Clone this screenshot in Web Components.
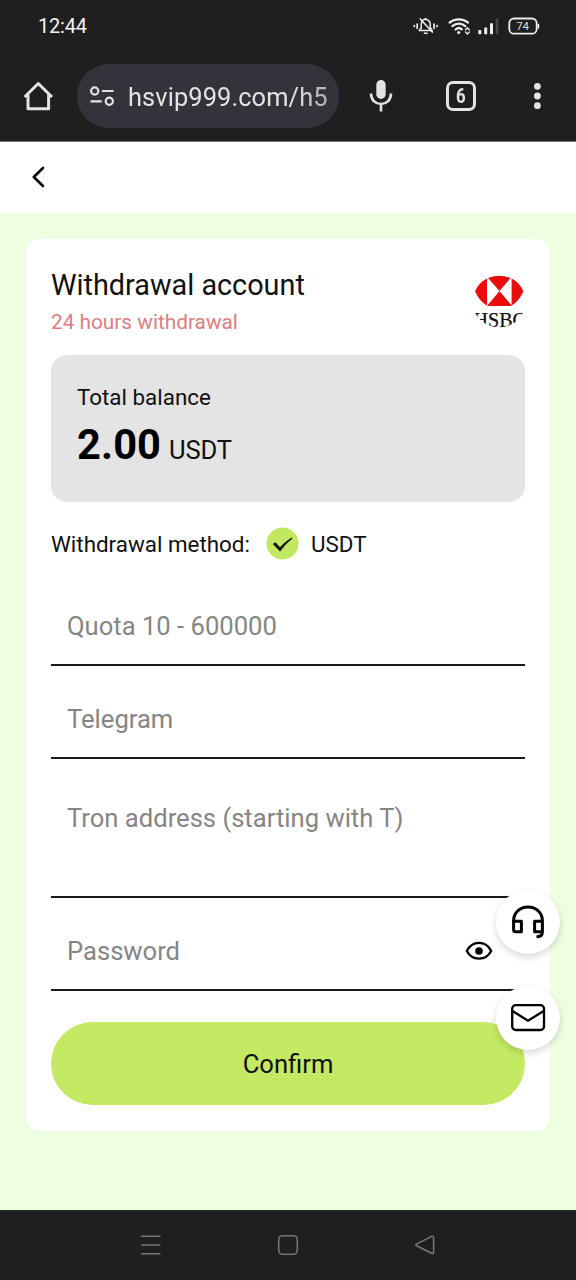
<!DOCTYPE html>
<html lang="en">
<head>
<meta charset="utf-8">
<title>Withdrawal account</title>
<style>
html,body{margin:0;height:100%}
body{font-family:Roboto,"Noto Sans",sans-serif;color:#111;background:#edffe0;overflow:hidden}
</style>
</head>
<body>
<app-screen>
  <status-bar>12:44</status-bar>
  <browser-bar><span>hsvip999.com/h5</span><span slot="tabs">6</span></browser-bar>
  <page-header></page-header>
  <account-card>
    <card-title><span>Withdrawal account</span><span slot="note">24 hours withdrawal</span></card-title>
    <balance-box><span slot="label">Total balance</span><span slot="amount">2.00</span><span slot="unit">USDT</span></balance-box>
    <method-row><span slot="label">Withdrawal method:</span><span>USDT</span></method-row>
    <form-field style="--h:80px;--gap:22px">Quota 10 - 600000</form-field>
    <form-field style="--h:93px;--gap:22px">Telegram</form-field>
    <form-field style="--h:139px;--gap:62px">Tron address (starting with T)</form-field>
    <form-field style="--h:93px;--gap:22px" eye>Password</form-field>
    <pill-button>Confirm</pill-button>
  </account-card>
  <fab-stack slot="overlay"></fab-stack>
  <nav-bar slot="nav"></nav-bar>
</app-screen>
<script>
const define = (name, html) => customElements.define(name, class extends HTMLElement {
  constructor() {
    super();
    const t = document.createElement('template');
    t.innerHTML = html;
    this.attachShadow({ mode: 'open' }).appendChild(t.content.cloneNode(true));
  }
});

define('app-screen', `<style>
:host{display:flex;flex-direction:column;width:576px;height:1280px;position:relative;background:#edffe0;overflow:hidden}
main{flex:1;min-height:0}
</style><main><slot></slot></main><slot name="overlay"></slot><slot name="nav"></slot>`);

define('status-bar', `<style>
:host{display:flex;justify-content:space-between;align-items:center;height:50px;padding:1px 35px 0 38px;box-sizing:border-box;background:#1f1f1f;color:#f4f4f4;font-size:20px;letter-spacing:-.2px}
svg{display:block}
</style><slot></slot>
<svg width="130" height="24" viewBox="411 13.5 130 24" fill="none" stroke="#eee" stroke-width="1.5" stroke-linecap="round">
<path d="M420 30H432L430.2 27V23.5A4.7 4.7 0 0 0 422.5 20L421.2 23.5V27.5L419.3 30"/>
<path d="M420.3 18.4L432.3 31.6M425.6 18V19M424.3 32.7H427" />
<path d="M414.3 25V26M417.2 23.6V27.8M434 23.6V27.8M437 25V26" stroke-width="1.7"/>
<g stroke-width="2.3"><path d="M449.6 22.1C454.7 17.7 463 17.7 468 22.1M452.4 25.6C456.3 22.3 461.5 22.3 465.2 25.6M455.6 29C457.8 27.1 460 27.1 461.8 28.8"/></g>
<circle cx="458.7" cy="32" r="1.6" fill="#eee" stroke="none"/>
<path d="M465.5 29.2L467.4 27.3L469.3 29.2M465.5 31.6L467.4 33.5L469.3 31.6" stroke-width="1.4"/>
<g stroke="none" fill="#eee"><rect x="478.3" y="29.5" width="3" height="4.2" rx=".6"/><rect x="484.2" y="27" width="3" height="6.7" rx=".6"/><rect x="490" y="22.8" width="3" height="10.9" rx=".6"/><rect x="495.8" y="18" width="2.6" height="15.7" rx=".6" fill="#484848"/></g>
<rect x="509.3" y="18" width="27.4" height="15.2" rx="4.8" stroke-width="1.8"/><path d="M538.4 24V27.5" stroke-width="1.6"/>
<text x="522.6" y="29.7" text-anchor="middle" font-family="Roboto" font-size="11.5" letter-spacing="0" fill="#ddd" stroke="none">74</text>
</svg>`);

define('browser-bar', `<style>
:host{display:flex;align-items:center;height:92px;box-sizing:border-box;padding:0 24px 0 22px;background:#1f1f1f;border-bottom:1px solid #777;color:#e3e3e3}
svg{display:block;flex:none}
.home{margin-right:23px}
.pill{display:flex;align-items:center;width:262px;height:64px;border-radius:32px;background:#33343b;box-sizing:border-box;padding:2px 11px 0 12px}
.url{margin-left:11px;flex:1;overflow:hidden;white-space:nowrap;font-size:25.4px;line-height:40px;letter-spacing:.1px;-webkit-mask:linear-gradient(90deg,#000 82%,rgba(0,0,0,.7));mask:linear-gradient(90deg,#000 82%,rgba(0,0,0,.7))}
.mic{margin-left:25px}
.tabs{margin-left:48px;width:30px;height:30px;border:3px solid #e3e3e3;border-radius:7px;box-sizing:border-box;display:flex;align-items:center;justify-content:center;font-size:20px;font-weight:700;line-height:1}
.tabs span{display:block;transform:scaleX(.84)}
.dots{margin-left:auto}
</style>
<svg class="home" width="32" height="32" viewBox="22 80 32 32" fill="none" stroke="#e3e3e3" stroke-width="3" stroke-linejoin="round"><path d="M24.6 97L38.3 83.5L52 97M28 94.5V108.8H48.6V94.5"/></svg>
<div class="pill"><svg width="28" height="24" viewBox="89.5 85 28 24" fill="none" stroke="#e3e3e3" stroke-width="2.2"><circle cx="95.2" cy="91" r="3.6"/><path d="M102.5 91H114M91 101.3H102.2"/><circle cx="109.8" cy="101.3" r="3.6"/></svg><div class="url"><slot></slot></div></div>
<svg class="mic" width="34" height="36" viewBox="364 78 34 36" fill="none" stroke="#e3e3e3" stroke-width="2.6"><rect x="376.3" y="80" width="9.4" height="19" rx="4.7" fill="#e3e3e3" stroke="none"/><path d="M371 93.5C371 107.5 391 107.5 391 93.5M381 104V111.5"/></svg>
<div class="tabs"><span><slot name="tabs"></slot></span></div>
<svg class="dots" width="30" height="30" viewBox="522 81 30 30" fill="#e3e3e3"><circle cx="537.4" cy="86.3" r="3.4"/><circle cx="537.4" cy="96" r="3.4"/><circle cx="537.4" cy="105.7" r="3.4"/></svg>`);

define('page-header', `<style>
:host{display:flex;align-items:center;height:71px;box-sizing:border-box;padding:0 30px 2px;background:#fff}
</style><svg width="18" height="24" viewBox="30 165 18 24" fill="none" stroke="#000" stroke-width="2.6" stroke-linecap="round" stroke-linejoin="round"><path d="M43 168L33.8 177L43 186"/></svg>`);

define('account-card', `<style>
:host{display:block;margin:25.5px 26px 0;height:892.5px;box-sizing:border-box;padding:26px 25px 0;background:#fff;border-radius:14px}
</style><slot></slot>`);

define('card-title', `<style>
:host{display:flex;justify-content:space-between;height:90px}
.t{font-size:28.8px;line-height:40px}
.n{font-size:20.8px;line-height:30px;color:#e07c80;margin-top:2px}
svg{margin:10.5px 0 0;display:block}
</style><div><div class="t"><slot></slot></div><div class="n"><slot name="note"></slot></div></div>
<svg width="52" height="53" viewBox="473 275 52 53"><defs><clipPath id="c"><circle cx="499.2" cy="300.4" r="27"/></clipPath></defs>
<path d="M487 278.6Q479 282.5 475 291.3Q479.5 301.5 487 305.6ZM511.6 278.6Q519.5 282.5 523.4 291.3Q519 301.5 511.6 305.6ZM488 278Q499 273.4 510.6 278L499.5 291ZM487 306H512L499.5 291Z" fill="#e90d0d"/>
<text clip-path="url(#c)" x="473.5" y="326.6" font-family="Liberation Serif" font-size="21" fill="#111" stroke="#111" stroke-width=".25" textLength="52.5" lengthAdjust="spacingAndGlyphs">HSBC</text></svg>`);

define('balance-box', `<style>
:host{display:block;height:147px;box-sizing:border-box;padding:26px 26px 0;background:#e4e4e4;border-radius:16px}
.l{font-size:22.4px;line-height:32px}
.r{display:flex;align-items:baseline;line-height:50px;margin-top:7px}
.a{font-size:41.6px;font-weight:700;letter-spacing:.1px;color:#000}
.u{font-size:25.6px;margin-left:8px;letter-spacing:-.2px}
</style><div class="l"><slot name="label"></slot></div><div class="r"><span class="a"><slot name="amount"></slot></span><span class="u"><slot name="unit"></slot></span></div>`);

define('method-row', `<style>
:host{display:flex;align-items:center;height:84px;font-size:22.4px;line-height:30px}
svg{margin:0 12px 0 16px}
</style><slot name="label"></slot><svg width="33" height="33" viewBox="0 0 33 33"><circle cx="16.5" cy="16.5" r="16" fill="#c2e85f"/><path d="M6.8 17.1L9.4 15.3L14 20.2C17.5 16.6 21 13.7 25.8 10.6L26.5 11.6C21.5 15.4 17.7 19.6 14.1 24.6Z" fill="#111"/></svg><slot></slot>`);

define('form-field', `<style>
:host{display:flex;align-items:flex-end;height:var(--h);box-sizing:border-box;padding:0 16px var(--gap);border-bottom:2px solid #1a1a1a;color:#858585;font-size:25.6px;line-height:32px}
.x{flex:1}
svg{display:none}
:host([eye]) svg{display:block;margin:0 16.5px 6px}
</style><span class="x"><slot></slot></span><svg width="28" height="20" viewBox="0 0 28 20" fill="none" stroke="#000" stroke-width="2.4"><path d="M1.8 10C7.3-.8 20.7-.8 26.2 10C20.7 20.2 7.3 20.2 1.8 10Z" stroke-linejoin="round"/><circle cx="14" cy="10" r="3.8" fill="#000" stroke="none"/></svg>`);

define('pill-button', `<style>
:host{display:flex;align-items:center;justify-content:center;box-sizing:border-box;margin-top:31px;height:83px;padding-top:2px;border-radius:42px;background:#c4e962;color:#111;font-size:25.6px}
</style><slot></slot>`);

define('fab-stack', `<style>
:host{position:absolute;left:496px;top:890px;display:flex;flex-direction:column;gap:32px}
div{width:64px;height:64px;border-radius:50%;background:#fff;box-shadow:0 3px 7px rgba(0,0,0,.16);display:flex;align-items:center;justify-content:center}
svg{display:block}
</style>
<div><svg width="40" height="40" viewBox="508 902 40 40" fill="none" stroke="#000" stroke-width="3"><path d="M513.6 922V921C513.6 902.4 542.4 902.4 542.4 921V932C542.4 935 540.5 936.8 536.5 936.8" /><path d="M513.6 921.3H521.4V931.8H515.6Q513.6 931.8 513.6 929.8ZM542.4 921.3H534.6V931.8H542.4" stroke-linejoin="round"/></svg></div>
<div><svg width="40" height="32" viewBox="508 1002 40 32" fill="none" stroke="#000" stroke-width="2.3" stroke-linejoin="round"><rect x="512.2" y="1005.2" width="31.8" height="24.8" rx="3.5"/><path d="M512.5 1011L528 1020.7L543.7 1011"/></svg></div>`);

define('nav-bar', `<style>
:host{display:grid;grid-template-columns:137px 137px 137px;justify-content:center;align-items:center;justify-items:center;height:70px;background:#1f1f1f;flex:none;box-sizing:border-box;border-top:1px solid #253020;padding-bottom:2px}
svg{display:block}
</style>
<svg width="22" height="22" fill="none" stroke="#757575" stroke-width="1.5"><path d="M1 2.2H20.5M1 11H20.5M1 19.8H20.5"/></svg>
<svg width="22" height="22" fill="none" stroke="#757575" stroke-width="1.6"><rect x="1.7" y="1.7" width="18.6" height="18.6" rx="4"/></svg>
<svg width="22" height="22" fill="none" stroke="#757575" stroke-width="1.6" stroke-linejoin="round"><path d="M2.5 10.1L17.6 2.4Q19.6 1.6 19.6 3.8V18Q19.6 20.3 17.6 19.3L2.5 11.8Q1.2 10.9 2.5 10.1Z"/></svg>`);
</script>
</body>
</html>
